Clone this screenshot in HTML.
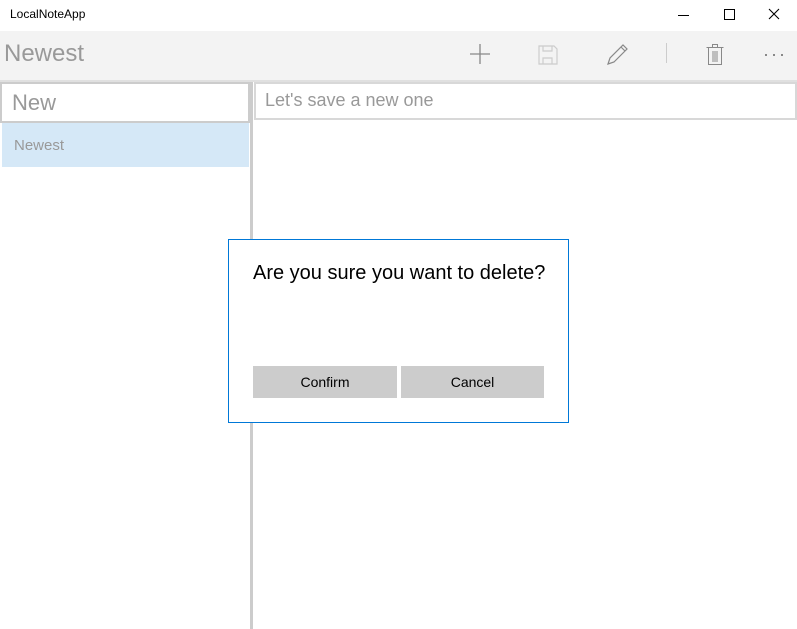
<!DOCTYPE html>
<html><head><style>
body{margin:0;width:797px;height:629px;position:relative;background:#fff;font-family:"Liberation Sans",sans-serif;overflow:hidden}
.a{position:absolute}
</style></head><body>
<div class="a" style="left:10px;top:7px;font-size:12px;color:#000">LocalNoteApp</div>
<div class="a" style="left:678px;top:15px;width:11px;height:1px;background:#000"></div>
<div class="a" style="left:724px;top:9px;width:9px;height:9px;border:1px solid #000"></div>
<svg class="a" style="left:768px;top:8px" width="12" height="12"><path d="M1 1L11 11M11 1L1 11" stroke="#000" stroke-width="1.1"/></svg>
<div class="a" style="left:0;top:31px;width:797px;height:49px;background:#f3f3f3"></div>
<div class="a" style="left:4px;top:40px;font-size:24px;color:#999">Newest</div>
<svg class="a" style="left:468px;top:42px" width="24" height="24"><path d="M12 2V22M2 12H22" stroke="#888" stroke-width="1.3"/></svg>
<svg class="a" style="left:537px;top:44px" width="22" height="22"><path d="M2 2H17L20 5V20H2Z M6 20V14H15V20 M6 2V7H15V2" stroke="#ccc" fill="none" stroke-width="1.2"/></svg>
<svg class="a" style="left:604px;top:42px" width="26" height="26"><path d="M4 22L6 16L19 3L23 7L10 20Z M17 5L21 9" stroke="#888" fill="none" stroke-width="1.2"/></svg>
<div class="a" style="left:666px;top:43px;width:1px;height:20px;background:#ccc"></div>
<svg class="a" style="left:705px;top:43px" width="20" height="24"><path d="M1.5 4.5H18.5 M7.5 4.5V1.5H12.5V4.5 M3.5 4.5V21.5H16.5V4.5 M8 8V19M10 8V19M12 8V19" stroke="#888" fill="none" stroke-width="1"/></svg>
<div class="a" style="left:765px;top:54px;width:2px;height:2px;background:#888"></div>
<div class="a" style="left:773px;top:54px;width:2px;height:2px;background:#888"></div>
<div class="a" style="left:781px;top:54px;width:2px;height:2px;background:#888"></div>
<div class="a" style="left:0;top:80px;width:797px;height:2px;background:#e0e0e0"></div>
<div class="a" style="left:0;top:82px;width:246px;height:37px;border:2px solid #ccc;background:#fff"></div>
<div class="a" style="left:12px;top:90px;font-size:22px;color:#999">New</div>
<div class="a" style="left:2px;top:123px;width:247px;height:44px;background:#d5e8f7"></div>
<div class="a" style="left:14px;top:137px;font-size:15px;color:#999">Newest</div>
<div class="a" style="left:250px;top:82px;width:3px;height:547px;background:#ccc"></div>
<div class="a" style="left:254px;top:82px;width:539px;height:34px;border:2px solid #d8d8d8;background:#fff"></div>
<div class="a" style="left:265px;top:90px;font-size:18px;color:#999">Let's save a new one</div>
<div class="a" style="left:228px;top:239px;width:339px;height:182px;border:1px solid #0078d7;background:#fff"></div>
<div class="a" style="left:253px;top:262px;font-size:20px;color:#000">Are you sure you want to delete?</div>
<div class="a" style="left:253px;top:366px;width:144px;height:32px;background:#ccc;font-size:14px;line-height:33px;text-align:center">Confirm</div>
<div class="a" style="left:401px;top:366px;width:143px;height:32px;background:#ccc;font-size:14px;line-height:33px;text-align:center">Cancel</div>
</body></html>
